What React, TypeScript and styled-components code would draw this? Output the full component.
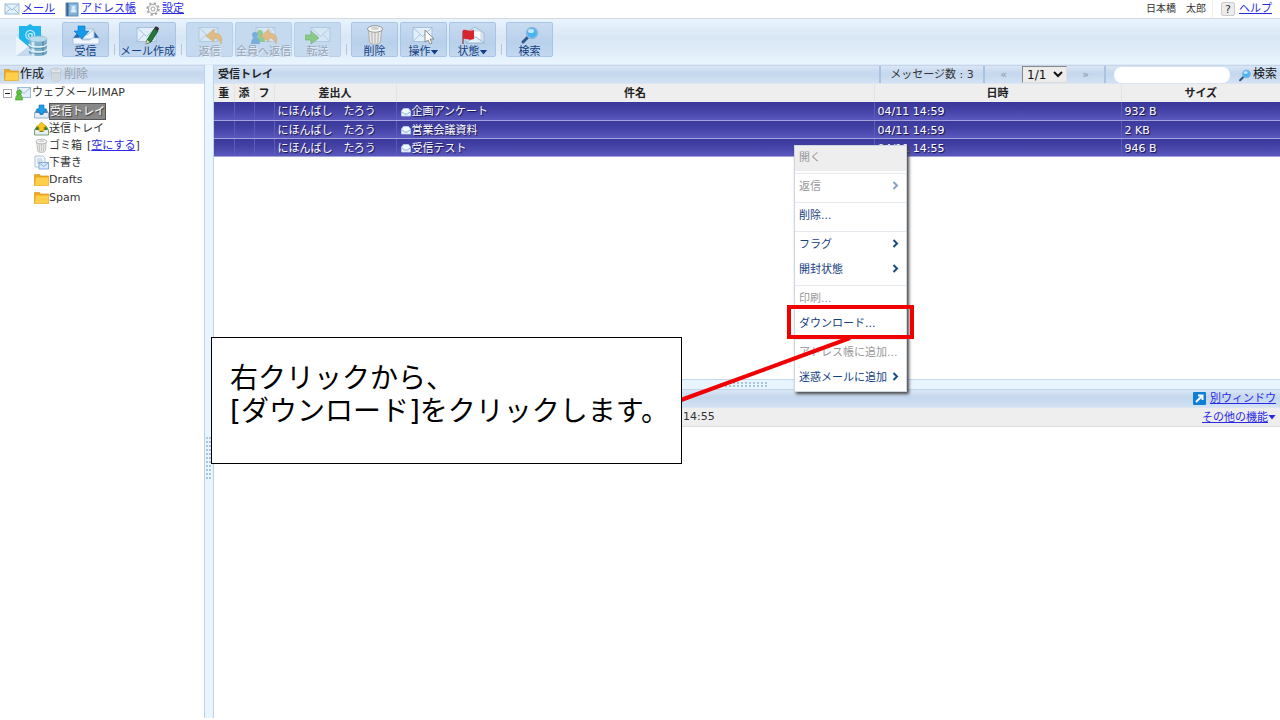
import React from 'react';
import styled, { createGlobalStyle, css } from 'styled-components';

const GlobalStyle = createGlobalStyle`
  *, *::before, *::after { box-sizing: border-box; }
  body {
    margin: 0;
    background: #fff;
    color: #333;
    font: 11px/18px "DejaVu Sans", "Noto Sans CJK JP", sans-serif;
  }
  button, input, select { font: inherit; color: inherit; }
  a { color: #2a2ae6; text-decoration: underline; }
`;

const barGradient = 'linear-gradient(#d9e6f5, #c4d7ed 45%, #d3e2f3)';

/* ---------- page frame ---------- */

const Page = styled.div`
  position: relative;
  display: flex;
  flex-direction: column;
  min-height: 100vh;
  padding-bottom: 2px;
  overflow: hidden;
`;

const TopBar = styled.header`
  display: flex;
  justify-content: space-between;
  height: 19px;
  padding: 0 8px 0 4px;
  border-bottom: 1px solid #d5d9de;
`;

const TopNav = styled.nav`
  display: flex;
  gap: 10px;
`;

const TopItem = styled.div`
  display: flex;
  align-items: center;
  gap: 2px;
  height: 18px;
`;

const UserName = styled.span`
  padding-right: 6px;
  border-right: 1px solid #eee;
  font-size: 10px;
`;

const UserArea = styled.div`
  display: flex;
  align-items: center;
  gap: 8px;
  height: 18px;
`;

const HelpBadge = styled.span`
  display: inline-block;
  width: 14px;
  height: 14px;
  margin-right: 2px;
  border: 1px solid #ccc;
  border-radius: 2px;
  background: #ececec;
  line-height: 13px;
  text-align: center;
`;

/* ---------- toolbar ---------- */

const Toolbar = styled.div`
  display: flex;
  align-items: flex-start;
  gap: 2px;
  height: 46px;
  padding: 3px 15px 0;
  background: linear-gradient(#e9f4fd, #d9e7f5 40%, #ddeaf7 60%, #e9f5fe);
  border-bottom: 1px solid #dfeaf6;
`;

const LogoSlot = styled.div`
  width: 45px;
  height: 36px;
`;

const ToolButton = styled.button<{ $wide?: boolean }>`
  display: flex;
  flex-direction: column;
  align-items: center;
  width: ${(p) => (p.$wide ? 57 : 47)}px;
  height: 35px;
  padding: 1px 0 0;
  border: 1px solid #a9c5e6;
  border-radius: 2px;
  background: linear-gradient(#c8dbf1, #b9d0eb 60%, #c3d8f0);
  color: #123f80;
  line-height: 14px;
  white-space: nowrap;
  & > svg { display: block; flex: none; }
  &:disabled {
    border-color: #b9d0ea;
    background: #c5d9ef;
    color: #97a5b5;
    text-shadow: 1px 1px 0 #e8f0f8;
  }
  &:disabled > svg { opacity: 0.6; }
`;

const ToolLabel = styled.span`
  display: flex;
  align-items: center;
  height: 16px;
`;

const Caret = styled.i`
  width: 8px;
  height: 5px;
  background: currentColor;
  clip-path: polygon(0 0, 100% 0, 50% 100%);
`;

const ToolSeparator = styled.i`
  width: 1px;
  height: 11px;
  margin: 22px 2px 0 3px;
  background: #b7c5d4;
`;

/* ---------- body ---------- */

const Body = styled.div`
  flex: 1;
  display: grid;
  grid-template-columns: 204px 10px minmax(0, 1fr);
`;

const Bar = styled.div`
  display: flex;
  align-items: center;
  height: 19px;
  background: ${barGradient};
  border-top: 1px solid #c2d5ea;
  border-bottom: 1px solid #dbe6f2;
`;

const FolderBar = styled(Bar)`
  gap: 5px;
  padding-left: 4px;
`;

const FlatButton = styled.button`
  display: flex;
  align-items: center;
  gap: 1px;
  padding: 0;
  border: 0;
  background: none;
  color: #111;
  font-size: 12px;
  line-height: 17px;
  &:disabled { color: #97a0aa; }
  &:disabled > svg { opacity: 0.6; }
`;

const Tree = styled.ul`
  margin: 0;
  padding: 0;
  list-style: none;
`;

const SubTree = styled(Tree)`
  padding-left: 34px;
`;

const TreeRow = styled.div<{ $compact?: boolean }>`
  display: flex;
  align-items: center;
  height: ${(p) => (p.$compact ? 17 : 18)}px;
`;

const RootRow = styled(TreeRow)`
  padding-left: 3px;
`;

const Toggle = styled.button`
  display: grid;
  place-items: center;
  width: 9px;
  height: 9px;
  margin-right: 3px;
  padding: 0;
  border: 1px solid #aaa;
  background: #fff;
  &::after {
    content: '';
    width: 5px;
    height: 1px;
    background: #222;
  }
`;

const FolderName = styled.span<{ $selected?: boolean }>`
  ${(p) =>
    p.$selected &&
    css`
      height: 17px;
      line-height: 15px;
      border: 1px solid #555;
      background: #888;
      color: #fff;
      text-shadow: 1px 1px 1px #333;
    `}
`;

const EmptyAction = styled.span`
  margin-left: 5px;
`;

const VerticalSplitter = styled.div`
  display: flex;
  align-items: center;
  justify-content: center;
  padding-top: 135px;
  border: solid #bcd2ea;
  border-width: 0 1px;
  background: #e8f4fe;
`;

const HorizontalSplitter = styled.div`
  display: flex;
  align-items: center;
  justify-content: center;
  border-top: 1px solid #c4d8ee;
  background: #e8f4fe;
`;

const Grip = styled.i<{ $vertical?: boolean }>`
  width: ${(p) => (p.$vertical ? 6 : 44)}px;
  height: ${(p) => (p.$vertical ? 44 : 6)}px;
  background: conic-gradient(from 270deg at 2px 2px, #a9c5e4 25%, transparent 0) 0 0 /
    ${(p) => (p.$vertical ? '3px 4px' : '4px 3px')};
`;

const MailArea = styled.main`
  display: grid;
  grid-template-rows: 314px 10px 1fr;
`;

const BoxTitle = styled.h1`
  flex: 1;
  margin: 0;
  padding-left: 4px;
  color: #222;
  font-size: 11px;
  font-weight: 700;
`;

const BarCell = styled.div<{ $width: number }>`
  display: flex;
  align-items: center;
  justify-content: center;
  width: ${(p) => p.$width}px;
  height: 17px;
  border-left: 2px solid #a9c3e0;
`;

const SearchCell = styled(BarCell)`
  justify-content: flex-end;
  padding-right: 3px;
`;

const PagerButton = styled.button`
  width: 37px;
  padding: 0;
  border: 0;
  background: none;
  color: #8b97a5;
`;

const PageSelect = styled.select`
  width: 45px;
  height: 17px;
  padding: 0;
  border: 1px solid #888;
  border-color: #888 #ddd #ddd #888;
  border-radius: 0;
  background: #ececec;
  color: #111;
  font-size: 12px;
`;

const SearchBox = styled.input`
  width: 116px;
  height: 16px;
  margin-right: 8px;
  padding: 0 8px;
  border: 0;
  border-radius: 8px;
  background: #fff;
`;

const MailTable = styled.table`
  width: 100%;
  border-collapse: collapse;
  table-layout: fixed;
  th {
    height: 18px;
    padding: 1px 0 0;
    border-right: 1px solid #e4e4e4;
    background: #eee;
    color: #222;
    line-height: 17px;
    text-align: center;
  }
  td {
    height: 18px;
    padding: 2px 3px 0;
    border-right: 1px solid #5d5ab8;
    border-bottom: 1px solid #a3a2dc;
    color: #fff;
    line-height: 15px;
    text-shadow: 1px 1px 1px #111144;
    white-space: nowrap;
  }
  th:last-child, td:last-child { border-right: 0; }
`;

const Row = styled.tr`
  background: linear-gradient(#3a379b, #4340a4 40%, #5a57bd);
`;

const Subject = styled.div`
  display: flex;
  align-items: center;
  gap: 1px;
  padding-left: 1px;
`;

const Col = styled.col<{ $width?: number }>`
  ${(p) => p.$width && `width: ${p.$width}px;`}
`;

const PreviewBar = styled(Bar)`
  justify-content: flex-end;
  gap: 4px;
  padding-right: 4px;
`;

const PreviewInfo = styled.div`
  display: flex;
  justify-content: space-between;
  height: 19px;
  padding: 0 4px 0 469px;
  border-bottom: 1px solid #ddd;
  background: #eee;
  line-height: 17px;
`;

const MoreLink = styled.a`
  display: flex;
  align-items: center;
`;

/* ---------- context menu ---------- */

const Menu = styled.ul`
  position: absolute;
  left: 794px;
  top: 145px;
  width: 113px;
  margin: 0;
  padding: 0;
  border: 1px solid #ccd5e2;
  background: #fff;
  box-shadow: 2px 2px 3px #444;
  list-style: none;
`;

const MenuItem = styled.li<{ $divided?: boolean }>`
  ${(p) =>
    p.$divided &&
    css`
      margin-top: 2px;
      padding-top: 1px;
      border-top: 1px solid #e6e9ee;
    `}
`;

const MenuButton = styled.button<{ $hover?: boolean }>`
  display: flex;
  align-items: center;
  justify-content: space-between;
  width: 100%;
  height: 25px;
  padding: 0 7px 1px 4px;
  border: 0;
  background: ${(p) => (p.$hover ? '#eee' : 'transparent')};
  color: #164180;
  text-align: left;
  white-space: nowrap;
  & > svg { margin-bottom: 3px; }
  &:disabled { color: #999; }
  &:disabled > svg { opacity: 0.5; }
`;

/* ---------- instruction overlay ---------- */

const Highlight = styled.div`
  position: absolute;
  left: 787px;
  top: 305px;
  width: 127px;
  height: 34px;
  border: 4px solid #f00000;
`;

const Leader = styled.svg`
  position: absolute;
  left: 680px;
  top: 336px;
`;

const Callout = styled.p`
  position: absolute;
  left: 211px;
  top: 337px;
  width: 471px;
  height: 127px;
  margin: 0;
  padding: 24px 18px;
  border: 1px solid #000;
  background: #fff;
  color: #000;
  font-size: 28px;
  line-height: 33px;
  white-space: nowrap;
`;

/* ---------- icons ---------- */

type IconProps = { w?: number; h?: number };

const Envelope = ({ w = 16, h = 14 }: IconProps) => (
  <svg width={w} height={h} viewBox="0 0 16 14" aria-hidden="true">
    <rect x="1" y="2" width="14" height="10" fill="#e4f0fa" stroke="#9dbcd8" />
    <path d="M1 2l7 6 7-6M1 12l5-5M15 12l-5-5" fill="none" stroke="#9dbcd8" />
  </svg>
);

const BookIcon = () => (
  <svg width="14" height="15" viewBox="0 0 14 15" aria-hidden="true">
    <rect x="1" y="1" width="12" height="13" fill="#7fb0da" stroke="#5f8fba" />
    <path d="M2.500 1v13" stroke="#3b6388" strokeWidth="2" />
    <rect x="5.500" y="3" width="6" height="8" fill="#a5cdec" />
    <circle cx="8.500" cy="5.500" r="1.500" fill="#e2f1fc" />
    <path d="M6 10c0-4 5-4 5 0" fill="#e2f1fc" />
  </svg>
);

const GearIcon = () => (
  <svg width="14" height="14" viewBox="0 0 14 14" fill="none" stroke="#a5a5a5" aria-hidden="true">
    <circle cx="7" cy="7" r="5.800" strokeWidth="1.800" strokeDasharray="2.200 2.350" />
    <circle cx="7" cy="7" r="4.700" fill="#f7f7f7" />
    <circle cx="7" cy="7" r="2" fill="#fff" />
  </svg>
);

const LogoIcon = () => (
  <svg width="33" height="36" viewBox="0 0 33 36" aria-hidden="true">
    <path d="M1 14L15 2l14 12v20H1z" fill="#c9ddec" />
    <path d="M4 4h8l3-2 3 2h8v17l-11 7L4 20z" fill="#1fb4ec" />
    <text x="15" y="16" fill="#fff" fontSize="11" textAnchor="middle">@</text>
    <path d="M1 14l14 12L1 34z" fill="#edf5fb" />
    <path d="M1 34l13-10 6 10z" fill="#c5dbed" />
    <path d="M14 17v14c0 4 18 4 18 0V17z" fill="#7fb1cd" />
    <path d="M18 18v16" stroke="#d5eaf4" strokeWidth="3" />
    <path d="M28 18v15" stroke="#5c93b3" strokeWidth="2" />
    <path d="M14 22c0 4 18 4 18 0M14 27c0 4 18 4 18 0" fill="none" stroke="#e7f5fb" strokeWidth="1.500" />
    <path d="M14 23.500c0 4 18 4 18 0M14 28.500c0 4 18 4 18 0" fill="none" stroke="#4b86a8" strokeWidth=".7" />
    <ellipse cx="23" cy="17" rx="9" ry="3" fill="#b9dcec" stroke="#7fb1cb" strokeWidth=".6" />
  </svg>
);

const ReceiveIcon = () => (
  <svg width="28" height="21" viewBox="0 0 28 21" aria-hidden="true">
    <path d="M1 14l6-7h15l5 7z" fill="#2c66b0" />
    <path d="M8 5h14v10H8z" fill="#e9f3fc" stroke="#a9c4dd" />
    <path d="M8 5l7 6 7-6" fill="none" stroke="#a9c4dd" />
    <path d="M1 14h7l2 2h8l2-2h7v6H1z" fill="#f1f7fd" stroke="#9eb9d6" strokeWidth=".7" />
    <path d="M6 2h7v5h4l-7 8-8-8h4z" fill="#139ae8" stroke="#0873c4" strokeWidth=".6" />
  </svg>
);

const BigEnvelope = ({ x = 2 }: { x?: number }) => (
  <g fill="#e3effa" stroke="#a5c1dc">
    <rect x={x} y="3.500" width="19" height="14" />
    <path d={`M${x} 3.500l9.500 9 9.500-9M${x} 17.500l7-7M${x + 19} 17.500l-7-7`} fill="none" />
  </g>
);

const ComposeIcon = () => (
  <svg width="26" height="21" viewBox="0 0 26 21" aria-hidden="true">
    <BigEnvelope />
    <path d="M19 5l4 2-7 11-5 2 1-4z" fill="#207a35" stroke="#0f3e1d" strokeWidth=".7" />
    <path d="M19 5l1-2c1-1 4 0 4 2l-1 2z" fill="#333" />
    <path d="M12 16l3 2-4 2z" fill="#ead7a0" />
  </svg>
);

const replyPath = 'M7 12l8-7v4c7 0 9 5 7 11-1-4-3-6-7-6v4z';

const ReplyIcon = () => (
  <svg width="26" height="21" viewBox="0 0 26 21" aria-hidden="true">
    <BigEnvelope x={2} />
    <path d={replyPath} transform="translate(2 0)" fill="#f2a83c" stroke="#d48a24" strokeWidth=".6" />
  </svg>
);

const ReplyAllIcon = () => (
  <svg width="28" height="21" viewBox="0 0 28 21" aria-hidden="true">
    <BigEnvelope x={6} />
    <g fill="#74bf55">
      <circle cx="10" cy="9" r="3" />
      <path d="M6 18c0-9 9-9 9 0z" />
    </g>
    <g fill="#4a90cf">
      <circle cx="5" cy="11" r="3" />
      <path d="M1 20c0-9 9-9 9 0z" />
    </g>
    <path d={replyPath} transform="translate(4 0)" fill="#f2a83c" stroke="#d48a24" strokeWidth=".6" />
  </svg>
);

const ForwardIcon = () => (
  <svg width="26" height="21" viewBox="0 0 26 21" aria-hidden="true">
    <BigEnvelope x={6} />
    <path d="M0 11h6V7l8 7-8 6v-4H0z" fill="#5fbf3f" stroke="#409a26" strokeWidth=".6" />
  </svg>
);

const TrashIcon = ({ w = 16, h = 19 }: IconProps) => (
  <svg width={w} height={h} viewBox="0 0 16 19" aria-hidden="true">
    <path d="M2 5h12l-1 11c0 3-10 3-10 0z" fill="#e9e9e7" stroke="#a5a5a2" strokeWidth=".8" />
    <path d="M5 8l.5 9M8 8v9M11 8l-.5 9" stroke="#b5b5b2" />
    <ellipse cx="8" cy="4.500" rx="6.800" ry="3" fill="#f5f5f3" stroke="#8e8e8c" strokeWidth=".8" />
    <ellipse cx="8" cy="4" rx="3.500" ry="1.200" fill="#cfcfcc" />
  </svg>
);

const OperateIcon = () => (
  <svg width="26" height="21" viewBox="0 0 26 21" aria-hidden="true">
    <BigEnvelope x={2} />
    <path d="M14 6v12l3-2 2 4 2-1-2-4h4z" fill="#fff" stroke="#777" strokeWidth=".8" />
  </svg>
);

const StatusIcon = () => (
  <svg width="26" height="21" viewBox="0 0 26 21" aria-hidden="true">
    <path d="M6 9l9-6 9 6v10H6z" fill="#d7e7f5" stroke="#9db8d1" />
    <path d="M10 7h11v9H10z" fill="#fff" stroke="#b6c8d8" strokeWidth=".7" />
    <path d="M6 19l8-6h2l8 6z" fill="#e4f0fa" stroke="#9db8d1" />
    <path d="M3 7v13" stroke="#7a1a1a" />
    <path d="M3 6c4-1 5 2 11 0v9c-6 2-7-1-11 0z" fill="#d7242d" />
  </svg>
);

const SearchIcon = ({ w = 20, h = 21 }: IconProps) => (
  <svg width={w} height={h} viewBox="0 0 20 21" aria-hidden="true">
    <path d="M3 18l5-5" stroke="#2f5688" strokeWidth="3" strokeLinecap="round" />
    <circle cx="12" cy="9" r="5.500" fill="#45b4f5" stroke="#8fb8dc" strokeWidth="1.500" />
    <ellipse cx="11" cy="7" rx="3" ry="2" fill="#c3e8fd" />
  </svg>
);

const FolderIcon = () => (
  <svg width="15" height="14" viewBox="0 0 15 14" aria-hidden="true">
    <path d="M.5 1.500h5l1 1.500h8v9.500H.5z" fill="#f0a820" stroke="#d99a22" strokeWidth=".7" />
    <path d="M1 12.500L2 4.500h12.500v8z" fill="#ffcf4b" />
  </svg>
);

const AccountIcon = () => (
  <svg width="17" height="15" viewBox="0 0 17 15" aria-hidden="true">
    <rect x="2.500" y="1.500" width="13" height="10" fill="#e4f0fa" stroke="#9dbcd8" />
    <path d="M2.500 1.500l6.500 6 6.500-6" fill="none" stroke="#9dbcd8" />
    <circle cx="4" cy="6.500" r="2.500" fill="#63c344" stroke="#36912a" strokeWidth=".6" />
    <path d="M.5 14c0-8 7-8 7 0z" fill="#63c344" stroke="#36912a" strokeWidth=".6" />
  </svg>
);

const TrayIcon = ({ out }: { out?: boolean }) => (
  <svg width="15" height="15" viewBox="0 0 15 15" aria-hidden="true">
    <path d="M.5 9L3 5h9l2.500 4v5H.5z" fill="#e4eef7" stroke={out ? '#5d8a52' : '#7da0c4'} strokeWidth=".8" />
    <path d="M1 9h4l1 2h3l1-2h4l-2-4H3z" fill={out ? '#3d7d38' : '#4f83b8'} />
    {out ? (
      <path d="M7.500 1l5 5H10v4H5V6H2.500z" fill="#f8c51c" stroke="#c99511" strokeWidth=".6" />
    ) : (
      <path d="M5 1h5v4h2.500l-5 5.500-5-5.500H5z" fill="#1aa0ea" stroke="#0a74c0" strokeWidth=".6" />
    )}
  </svg>
);

const DraftIcon = () => (
  <svg width="15" height="15" viewBox="0 0 15 15" aria-hidden="true">
    <path d="M1 1h8l2 2v9H1z" fill="#f4f9fd" stroke="#9fb6cb" strokeWidth=".8" />
    <path d="M3 4h5M3 6h6M3 8h2" stroke="#9fb6cb" strokeWidth=".8" />
    <rect x="5" y="7.500" width="9.500" height="6.500" fill="#d9eafa" stroke="#6f9ccb" strokeWidth=".8" />
    <path d="M5 7.500l4.700 4 4.800-4" fill="none" stroke="#6f9ccb" strokeWidth=".8" />
  </svg>
);

const OpenedMailIcon = () => (
  <svg width="10" height="10" viewBox="0 0 10 10" aria-hidden="true">
    <path d="M.5 4L2.500 1.500h5L9.500 4v5h-9z" fill="#f2f8ff" stroke="#b9cdec" strokeWidth=".8" />
    <path d="M1 5l2.500 2h3L9 5" fill="none" stroke="#7fa8d8" />
  </svg>
);

const PopOutIcon = () => (
  <svg width="13" height="13" viewBox="0 0 13 13" aria-hidden="true">
    <rect width="13" height="13" rx="1" fill="#0f7fd4" />
    <path d="M3 10l6-6M5 3.500h4.500V8" fill="none" stroke="#fff" strokeWidth="2" />
  </svg>
);

const Chevron = () => (
  <svg width="7" height="9" viewBox="0 0 7 9" aria-hidden="true">
    <path d="M1.500 1l3.500 3.500L1.500 8" fill="none" stroke="#164b86" strokeWidth="2" />
  </svg>
);

/* ---------- content ---------- */

type Tool = {
  label: string;
  icon: React.ReactNode;
  wide?: boolean;
  disabled?: boolean;
  caret?: boolean;
};

const toolGroups: Tool[][] = [
  [{ label: '受信', icon: <ReceiveIcon /> }],
  [{ label: 'メール作成', icon: <ComposeIcon />, wide: true }],
  [
    { label: '返信', icon: <ReplyIcon />, disabled: true },
    { label: '全員へ返信', icon: <ReplyAllIcon />, disabled: true, wide: true },
    { label: '転送', icon: <ForwardIcon />, disabled: true },
  ],
  [
    { label: '削除', icon: <TrashIcon w={20} h={21} /> },
    { label: '操作', icon: <OperateIcon />, caret: true },
    { label: '状態', icon: <StatusIcon />, caret: true },
  ],
  [{ label: '検索', icon: <SearchIcon /> }],
];

const messages = [
  { from: 'にほんばし　たろう', subject: '企画アンケート', date: '04/11 14:59', size: '932 B' },
  { from: 'にほんばし　たろう', subject: '営業会議資料', date: '04/11 14:59', size: '2 KB' },
  { from: 'にほんばし　たろう', subject: '受信テスト', date: '04/11 14:55', size: '946 B' },
];

const menuItems = [
  { label: '開く', disabled: true, hover: true },
  { label: '返信', disabled: true, submenu: true, divided: true },
  { label: '削除...', divided: true },
  { label: 'フラグ', submenu: true, divided: true },
  { label: '開封状態', submenu: true },
  { label: '印刷...', disabled: true, divided: true },
  { label: 'ダウンロード...' },
  { label: 'アドレス帳に追加...', disabled: true, divided: true },
  { label: '迷惑メールに追加', submenu: true },
];

const folders = [
  { name: '受信トレイ', icon: <TrayIcon />, selected: true },
  { name: '送信トレイ', icon: <TrayIcon out />, compact: true },
  { name: 'ゴミ箱', icon: <TrashIcon w={15} h={15} />, compact: true, canEmpty: true },
  { name: '下書き', icon: <DraftIcon />, compact: true },
  { name: 'Drafts', icon: <FolderIcon /> },
  { name: 'Spam', icon: <FolderIcon /> },
];

export default function App() {
  return (
    <Page>
      <GlobalStyle />
      <TopBar>
        <TopNav>
          <TopItem><Envelope /><a href="#mail">メール</a></TopItem>
          <TopItem><BookIcon /><a href="#address">アドレス帳</a></TopItem>
          <TopItem><GearIcon /><a href="#settings">設定</a></TopItem>
        </TopNav>
        <UserArea>
          <UserName>日本橋　太郎</UserName>
          <TopItem><HelpBadge>?</HelpBadge><a href="#help">ヘルプ</a></TopItem>
        </UserArea>
      </TopBar>

      <Toolbar>
        <LogoSlot><LogoIcon /></LogoSlot>
        {toolGroups.map((group, i) => (
          <React.Fragment key={i}>
            {i > 0 && <ToolSeparator />}
            {group.map((tool) => (
              <ToolButton key={tool.label} type="button" $wide={tool.wide} disabled={tool.disabled}>
                {tool.icon}
                <ToolLabel>{tool.label}{tool.caret && <Caret />}</ToolLabel>
              </ToolButton>
            ))}
          </React.Fragment>
        ))}
      </Toolbar>

      <Body>
        <aside>
          <FolderBar>
            <FlatButton type="button"><FolderIcon />作成</FlatButton>
            <FlatButton type="button" disabled><TrashIcon w={14} h={15} />削除</FlatButton>
          </FolderBar>
          <Tree>
            <li>
              <RootRow>
                <Toggle type="button" aria-label="ウェブメールIMAP" />
                <AccountIcon />
                <FolderName>ウェブメールIMAP</FolderName>
              </RootRow>
              <SubTree>
                {folders.map((f) => (
                  <li key={f.name}>
                    <TreeRow $compact={f.compact}>
                      {f.icon}
                      <FolderName $selected={f.selected}>{f.name}</FolderName>
                      {f.canEmpty && <EmptyAction>[<a href="#empty">空にする</a>]</EmptyAction>}
                    </TreeRow>
                  </li>
                ))}
              </SubTree>
            </li>
          </Tree>
        </aside>

        <VerticalSplitter><Grip $vertical /></VerticalSplitter>

        <MailArea>
          <section>
            <Bar>
              <BoxTitle>受信トレイ</BoxTitle>
              <BarCell $width={104}>メッセージ数 : 3</BarCell>
              <BarCell $width={121}>
                <PagerButton type="button" aria-label="前">«</PagerButton>
                <PageSelect aria-label="ページ" defaultValue="1"><option value="1">1/1</option></PageSelect>
                <PagerButton type="button" aria-label="次">»</PagerButton>
              </BarCell>
              <SearchCell $width={176}>
                <SearchBox type="text" aria-label="検索" />
                <FlatButton type="button"><SearchIcon w={14} h={16} />検索</FlatButton>
              </SearchCell>
            </Bar>
            <MailTable>
              <colgroup>
                <Col $width={20} /><Col $width={20} /><Col $width={20} />
                <Col $width={122} /><Col /><Col $width={247} /><Col $width={159} />
              </colgroup>
              <thead>
                <tr>
                  <th>重</th><th>添</th><th>フ</th><th>差出人</th><th>件名</th><th>日時</th><th>サイズ</th>
                </tr>
              </thead>
              <tbody>
                {messages.map((m) => (
                  <Row key={m.subject}>
                    <td /><td /><td />
                    <td>{m.from}</td>
                    <td><Subject><OpenedMailIcon />{m.subject}</Subject></td>
                    <td>{m.date}</td>
                    <td>{m.size}</td>
                  </Row>
                ))}
              </tbody>
            </MailTable>
          </section>

          <HorizontalSplitter><Grip /></HorizontalSplitter>

          <section>
            <PreviewBar><PopOutIcon /><a href="#window">別ウィンドウ</a></PreviewBar>
            <PreviewInfo>
              <span>14:55</span>
              <MoreLink href="#more">その他の機能<Caret /></MoreLink>
            </PreviewInfo>
          </section>
        </MailArea>
      </Body>

      <Menu>
        {menuItems.map((item) => (
          <MenuItem key={item.label} $divided={item.divided}>
            <MenuButton type="button" disabled={item.disabled} $hover={item.hover}>
              {item.label}
              {item.submenu && <Chevron />}
            </MenuButton>
          </MenuItem>
        ))}
      </Menu>

      <Highlight />
      <Leader width="174" height="68" viewBox="0 0 174 68" aria-hidden="true">
        <path d="M1 64L170 2" stroke="#f00000" strokeWidth="4" />
      </Leader>
      <Callout>右クリックから、<br />[ダウンロード]をクリックします。</Callout>
    </Page>
  );
}
